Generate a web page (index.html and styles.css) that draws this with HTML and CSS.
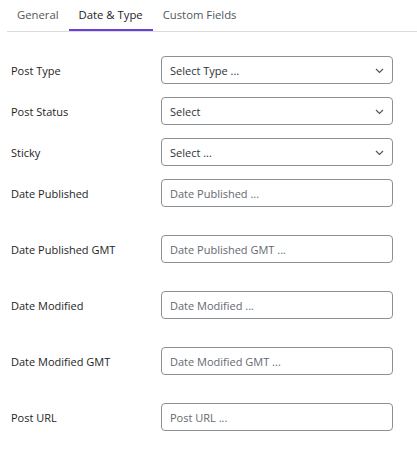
FILE: index.html
```html
<!DOCTYPE html>
<html>
<head>
<meta charset="utf-8">
<link rel="stylesheet" href="styles.css">
</head>
<body>
<div class="tabs">
  <div class="tab">General</div>
  <div class="tab active">Date &amp; Type</div>
  <div class="tab">Custom Fields</div>
</div>
<div class="form">
  <div class="row sel">
    <label class="lbl">Post Type</label>
    <div class="field select"><span>Select Type ...</span><svg class="chev" width="9" height="6" viewBox="0 0 9 6"><polyline points="1,1 4.5,4.5 8,1" fill="none" stroke="#50575e" stroke-width="1.2"/></svg></div>
  </div>
  <div class="row sel">
    <label class="lbl">Post Status</label>
    <div class="field select"><span>Select</span><svg class="chev" width="9" height="6" viewBox="0 0 9 6"><polyline points="1,1 4.5,4.5 8,1" fill="none" stroke="#50575e" stroke-width="1.2"/></svg></div>
  </div>
  <div class="row sel">
    <label class="lbl">Sticky</label>
    <div class="field select"><span>Select ...</span><svg class="chev" width="9" height="6" viewBox="0 0 9 6"><polyline points="1,1 4.5,4.5 8,1" fill="none" stroke="#50575e" stroke-width="1.2"/></svg></div>
  </div>
  <div class="row inp">
    <label class="lbl">Date Published</label>
    <div class="field input"><span class="ph">Date Published ...</span></div>
  </div>
  <div class="row inp">
    <label class="lbl">Date Published GMT</label>
    <div class="field input"><span class="ph">Date Published GMT ...</span></div>
  </div>
  <div class="row inp">
    <label class="lbl">Date Modified</label>
    <div class="field input"><span class="ph">Date Modified ...</span></div>
  </div>
  <div class="row inp">
    <label class="lbl">Date Modified GMT</label>
    <div class="field input"><span class="ph">Date Modified GMT ...</span></div>
  </div>
  <div class="row inp">
    <label class="lbl">Post URL</label>
    <div class="field input"><span class="ph">Post URL ...</span></div>
  </div>
</div>
</body>
</html>
```
FILE: styles.css
```css
* { box-sizing: border-box; }
body {
  margin: 0;
  background: #fff;
  font-family: "Open Sans", "Noto Sans", sans-serif;
  font-size: 11px;
  color: #1e1e1e;
}
.tabs {
  display: flex;
  margin-left: 7px;
  border-bottom: 1px solid #dcdcde;
  height: 32px;
}
.tab {
  padding: 0 10px;
  height: 31px;
  line-height: 29px;
  font-size: 11.3px;
  color: #50575e;
  border-bottom: 2px solid transparent;
}
.tab.active {
  color: #1e1e1e;
  border-bottom-color: #6741d9;
}
.form {
  padding: 24px 24px 0 11px;
}
.row {
  display: flex;
  align-items: center;
}
.row.sel { margin-bottom: 13px; }
.row.inp { margin-bottom: 28px; }
.lbl {
  width: 150px;
  flex: none;
  padding-top: 1px;
}
.field {
  flex: 1;
  height: 28px;
  border: 1px solid #8c8f94;
  border-radius: 4px;
  display: flex;
  align-items: center;
  padding: 0 7px 0 8px;
  font-size: 11px;
}
.select { color: #2c3338; justify-content: space-between; }
.chev { margin-right: 1px; margin-top: 1px; }
.ph { color: #646970; }
```
